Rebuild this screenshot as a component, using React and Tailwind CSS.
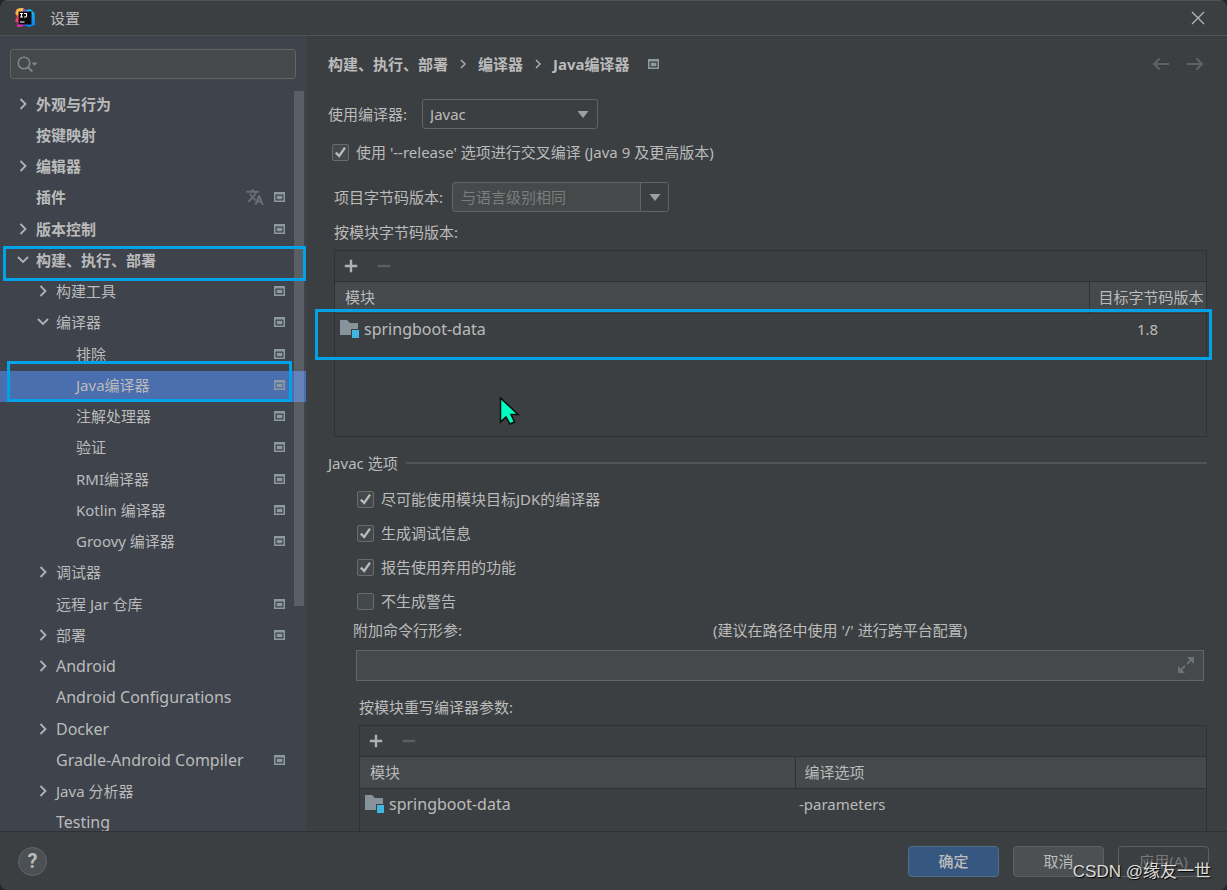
import React from "react";

const treeItems = [
  { label: "外观与行为", depth: 0, arrow: "right", bold: true },
  { label: "按键映射", depth: 0, bold: true },
  { label: "编辑器", depth: 0, arrow: "right", bold: true },
  { label: "插件", depth: 0, bold: true, project: true, translate: true },
  { label: "版本控制", depth: 0, arrow: "right", bold: true, project: true },
  { label: "构建、执行、部署", depth: 0, arrow: "down", bold: true, marked: true },
  { label: "构建工具", depth: 1, arrow: "right", project: true },
  { label: "编译器", depth: 1, arrow: "down", project: true },
  { label: "排除", depth: 2, project: true },
  { label: "Java编译器", depth: 2, project: true, selected: true },
  { label: "注解处理器", depth: 2, project: true },
  { label: "验证", depth: 2, project: true },
  { label: "RMI编译器", depth: 2, project: true },
  { label: "Kotlin 编译器", depth: 2, project: true },
  { label: "Groovy 编译器", depth: 2, project: true },
  { label: "调试器", depth: 1, arrow: "right" },
  { label: "远程 Jar 仓库", depth: 1, project: true },
  { label: "部署", depth: 1, arrow: "right", project: true },
  { label: "Android", depth: 1, arrow: "right", latin: true },
  { label: "Android Configurations", depth: 1, latin: true },
  { label: "Docker", depth: 1, arrow: "right", latin: true },
  { label: "Gradle-Android Compiler", depth: 1, project: true, latin: true },
  { label: "Java 分析器", depth: 1, arrow: "right" },
  { label: "Testing", depth: 1, latin: true },
];

const depthPadding = ["pl-4", "pl-9", "pl-14"];

const javacOptions = [
  { id: "target-jdk", label: "尽可能使用模块目标JDK的编译器", checked: true },
  { id: "debug-info", label: "生成调试信息", checked: true },
  { id: "deprecation", label: "报告使用弃用的功能", checked: true },
  { id: "no-warnings", label: "不生成警告", checked: false },
];

function Logo() {
  return (
    <svg width="20" height="20" viewBox="0 0 20 20" aria-hidden="true">
      <defs>
        <linearGradient id="logo-warm" x1="0" y1="0" x2="0" y2="1">
          <stop offset="0" stopColor="#fdb060" />
          <stop offset="0.4" stopColor="#fc4a5c" />
          <stop offset="1" stopColor="#f62db0" />
        </linearGradient>
        <linearGradient id="logo-cool" x1="0" y1="0" x2="0" y2="1">
          <stop offset="0" stopColor="#14c3f5" />
          <stop offset="1" stopColor="#0a7cf2" />
        </linearGradient>
      </defs>
      <path d="M11 2l4-1 4.500 4 0.500 12-6 2-6-2z" fill="url(#logo-cool)" />
      <path d="M2 1l6-1 4 4-5 13-5 2 1-4-3-2 2-4-2-4z" fill="url(#logo-warm)" />
      <path d="M2 1l5-1 2 4-5 4-3-2z" fill="#fdc34f" />
      <path d="M6 15l-4 4 5-0.500 3-2.500z" fill="#f02dc0" />
      <path d="M8 0.500l3 1.500 1 3H8z" fill="#a14be0" />
      <rect x="3.500" y="3.500" width="13" height="13" fill="#100a0c" />
      <path
        d="M5 5.500h3M6.500 5.500v3.500M5 9h3M9 5.500h2.500v2.500q0 1-1.200 1H9"
        fill="none"
        stroke="#fff"
        strokeWidth="1.1"
      />
      <path d="M5 14h4.500" stroke="#fff" strokeWidth="1.200" />
    </svg>
  );
}

function Chevron({ direction }) {
  return (
    <svg width="14" height="14" viewBox="0 0 14 14" aria-hidden="true" fill="none" stroke="#b0b3b5" strokeWidth="1.8">
      {direction === "down" ? <path d="M2 4l5 5 5-5" /> : <path d="M4.500 2l5 5-5 5" />}
    </svg>
  );
}

function ProjectIcon() {
  return (
    <svg width="11" height="10" viewBox="0 0 11 10" aria-hidden="true">
      <path d="M0 0h11v10H0zM1.500 2.500v6h8v-6z" fill="#8e9aa2" fillRule="evenodd" />
      <rect x="2.800" y="3.800" width="5.500" height="3.400" fill="#8e9aa2" />
    </svg>
  );
}

function TranslateIcon() {
  return (
    <svg width="18" height="18" viewBox="0 0 24 24" aria-hidden="true" fill="#6a707a" stroke="#6a707a" strokeWidth="0.800">
      <path d="M12.87 15.07l-2.54-2.51.03-.03A17.52 17.52 0 0 0 14.07 6H17V4h-7V2H8v2H1v1.99h11.17C11.5 7.92 10.44 9.75 9 11.35 8.07 10.32 7.3 9.19 6.69 8h-2c.73 1.63 1.73 3.17 2.98 4.56l-5.09 5.02L4 19l5-5 3.11 3.11.76-2.04zM18.5 10h-2L12 22h2l1.12-3h4.75L21 22h2l-4.5-12zm-2.62 7l1.62-4.33L19.12 17h-3.24z" />
    </svg>
  );
}

function ModuleIcon() {
  return (
    <svg width="20" height="18" viewBox="0 0 20 18" aria-hidden="true">
      <path d="M0 0h7l3 3h8v6h-7v6H0z" fill="#87939a" />
      <rect x="12" y="10" width="7" height="8" fill="#40b6e0" />
    </svg>
  );
}

function Triangle() {
  return (
    <svg width="12" height="7" viewBox="0 0 12 7" aria-hidden="true">
      <path d="M0.500 0h11L6 7z" fill="#9da0a2" />
    </svg>
  );
}

function Separator() {
  return (
    <svg width="6" height="10" viewBox="0 0 6 10" fill="none" stroke="#b0b3b5" strokeWidth="1.4" aria-hidden="true">
      <path d="M1 1l4 4-4 4" />
    </svg>
  );
}

function Mark({ className }) {
  return <span aria-hidden="true" className={`pointer-events-none absolute z-20 border-3 border-[#00a2e8] ${className}`} />;
}

function CheckOption({ id, label, checked }) {
  return (
    <div className="flex items-center gap-[7px]">
      <span className="relative flex size-[17px] shrink-0">
        <input
          id={id}
          type="checkbox"
          defaultChecked={checked}
          className="peer size-full appearance-none rounded-xs border border-[#6b6b6b] bg-[#43494a]"
        />
        <svg
          className="pointer-events-none absolute inset-0 hidden peer-checked:block"
          width="17"
          height="17"
          viewBox="0 0 17 17"
          fill="none"
          stroke="#b8babb"
          strokeWidth="2.4"
          aria-hidden="true"
        >
          <path d="M3.800 8.600l3.400 3.400L13 3.600" />
        </svg>
      </span>
      <label htmlFor={id}>{label}</label>
    </div>
  );
}

function Toolbar() {
  return (
    <div className="flex h-[31px] items-center gap-[19px] border-b border-[#2f3132] pl-[9px]">
      <button type="button" aria-label="添加">
        <svg width="14" height="14" viewBox="0 0 14 14" aria-hidden="true">
          <path d="M5.800 0.800h2.400v5h5v2.400h-5v5H5.800v-5h-5V5.800h5z" fill="#afb1b3" />
        </svg>
      </button>
      <button type="button" aria-label="移除" disabled>
        <svg width="14" height="14" viewBox="0 0 14 14" aria-hidden="true">
          <path d="M0.800 5.800h12.400v2.400H0.800z" fill="#5c5e60" />
        </svg>
      </button>
    </div>
  );
}

function TreeRow({ item }) {
  return (
    <li className="relative h-[31px] nth-[4n]:h-8" role="none">
      <button
        type="button"
        role="treeitem"
        aria-selected={!!item.selected}
        className={`flex h-[31px] w-full items-center pr-[21px] pb-[3px] text-left ${depthPadding[item.depth]} ${
          item.selected ? "bg-[#4b6eaf]" : ""
        } ${item.bold ? "font-bold" : ""} ${item.latin ? "text-base" : ""}`}
      >
        <span className="flex w-5 shrink-0">{item.arrow && <Chevron direction={item.arrow} />}</span>
        <span className="flex-1 whitespace-nowrap">{item.label}</span>
        <span className="flex items-center gap-2.5">
          {item.translate && <TranslateIcon />}
          {item.project && <ProjectIcon />}
        </span>
      </button>
      {item.marked && <Mark className="inset-x-0 top-0 -bottom-1 ml-[3px]" />}
      {item.selected && <Mark className="-top-2.5 right-3.5 bottom-0 left-[7px]" />}
    </li>
  );
}

function Sidebar() {
  return (
    <aside className="flex w-[306px] shrink-0 flex-col overflow-hidden bg-[#3e434c]">
      <div className="relative mx-2.5 mt-[13px] h-[30px] shrink-0">
        <input
          type="search"
          aria-label="搜索设置"
          className="size-full appearance-none rounded-[3px] border border-[#646464] bg-[#45494a] pr-2 pl-9 outline-none"
        />
        <svg className="pointer-events-none absolute top-[7px] left-[7px]" width="22" height="18" viewBox="0 0 22 18" fill="none" aria-hidden="true">
          <circle cx="7" cy="7" r="5.8" stroke="#7c858b" strokeWidth="1.6" />
          <path d="M11 11.3l4.3 4.2" stroke="#7c858b" strokeWidth="2" />
          <path d="M14.5 6.5h6l-3 3.4z" fill="#7c858b" />
        </svg>
      </div>
      <div className="relative mt-[11px] min-h-0 flex-1 overflow-hidden">
        <ul role="tree" aria-label="设置类别">
          {treeItems.map((item) => (
            <TreeRow key={item.label} item={item} />
          ))}
        </ul>
        <span className="absolute top-px right-0.5 h-[69.5%] w-2.5 bg-white/15" aria-hidden="true" />
      </div>
    </aside>
  );
}

function Content() {
  return (
    <main className="min-w-0 flex-1 overflow-hidden pr-5 pl-[22px]">
      <div className="flex h-14 items-center justify-between">
        <nav aria-label="路径" className="flex items-center gap-3 font-bold">
          <a href="#build">构建、执行、部署</a>
          <Separator />
          <a href="#compiler">编译器</a>
          <Separator />
          <a href="#java">Java编译器</a>
          <span className="pl-1.5">
            <ProjectIcon />
          </span>
        </nav>
        <div className="flex gap-4 pr-[3px]">
          <button type="button" aria-label="后退" disabled>
            <svg width="18" height="14" viewBox="0 0 18 14" fill="none" stroke="#5f6163" strokeWidth="2.2" aria-hidden="true">
              <path d="M17 7H2M7.5 1.5L2 7l5.5 5.5" />
            </svg>
          </button>
          <button type="button" aria-label="前进" disabled>
            <svg width="18" height="14" viewBox="0 0 18 14" fill="none" stroke="#5f6163" strokeWidth="2.2" aria-hidden="true">
              <path d="M1 7h15M10.500 1.500L16 7l-5.500 5.500" />
            </svg>
          </button>
        </div>
      </div>

      <div className="mt-[7px] flex items-center gap-[15px]">
        <label htmlFor="compiler">使用编译器:</label>
        <span className="relative flex h-[30px] w-44">
          <select
            id="compiler"
            className="size-full appearance-none rounded-[3px] border border-[#646464] bg-[#3c3f41] px-[7px] outline-none"
          >
            <option>Javac</option>
            <option>Eclipse</option>
          </select>
          <span className="pointer-events-none absolute top-3 right-[9px]">
            <Triangle />
          </span>
        </span>
      </div>

      <div className="mt-[11px] pl-1">
        <CheckOption id="release" label="使用 '--release' 选项进行交叉编译 (Java 9 及更高版本)" checked />
      </div>

      <div className="mt-[18px] flex items-center gap-[9px] pl-1.5">
        <label htmlFor="bytecode">项目字节码版本:</label>
        <div className="flex h-[30px] w-[217px] overflow-hidden rounded-[3px] border border-[#646464] bg-[#45494a]">
          <input
            id="bytecode"
            placeholder="与语言级别相同"
            className="min-w-0 flex-1 px-2 outline-none placeholder:text-[#7b7d7e]"
          />
          <button type="button" aria-label="选择版本" className="flex w-7 items-center justify-center border-l border-[#646464] bg-[#3c3f41]">
            <Triangle />
          </button>
        </div>
      </div>

      <h2 className="mt-2 pl-1.5">按模块字节码版本:</h2>
      <div className="relative mt-1.5 ml-1.5 h-[187px] border border-[#2f3132]">
        <Toolbar />
        <table className="w-full table-fixed border-collapse text-left">
          <thead>
            <tr className="h-[31px] border-b border-[#2f3132] bg-[#45494b]">
              <th className="border-r border-[#2f3132] pl-2.5 font-normal">模块</th>
              <th className="w-[117px] pl-[9px] font-normal whitespace-nowrap">目标字节码版本</th>
            </tr>
          </thead>
          <tbody>
            <tr className="h-[31px]">
              <td className="pl-[5px]">
                <span className="flex items-center gap-1 text-base">
                  <ModuleIcon />
                  springboot-data
                </span>
              </td>
              <td className="text-center">1.8</td>
            </tr>
          </tbody>
        </table>
        <Mark className="top-[58px] -right-1.5 -left-5 h-[51px]" />
        <svg className="absolute top-[145px] left-[164px]" width="22" height="30" viewBox="0 0 22 30" aria-hidden="true">
          <path d="M1.500 2v24l5.500-5 4 7 4.500-2-3.500-7.500h7z" fill="#00ffc0" stroke="#0a0a0a" strokeWidth="1.500" />
        </svg>
      </div>

      <div className="mt-3.5 flex items-center gap-2">
        <h2>Javac 选项</h2>
        <span className="h-0.5 flex-1 bg-[#515456]" />
      </div>

      <div className="mt-3 flex flex-col gap-2.5 pl-[29px]">
        {javacOptions.map((option) => (
          <CheckOption key={option.id} {...option} />
        ))}
      </div>

      <div className="mt-[5px] flex pl-[25px]">
        <label htmlFor="extra-args" className="w-[360px] shrink-0">
          附加命令行形参:
        </label>
        <span className="whitespace-nowrap">(建议在路径中使用 '/' 进行跨平台配置)</span>
      </div>
      <div className="relative mt-2 mr-[3px] ml-7 h-[31px]">
        <input id="extra-args" className="size-full border border-[#646464] bg-[#45494a] pr-8 pl-2 outline-none" />
        <button type="button" aria-label="展开" className="absolute top-[7px] right-2.5">
          <svg width="16" height="16" viewBox="0 0 16 16" aria-hidden="true">
            <path d="M9 0h7v7zM0 9v7h7z" fill="#6c7479" />
            <path d="M9 7l4-4M7 9l-4 4" stroke="#6c7479" strokeWidth="1.800" />
          </svg>
        </button>
      </div>

      <h2 className="mt-3.5 pl-[31px]">按模块重写编译器参数:</h2>
      <div className="mt-1.5 ml-[31px] h-[187px] border border-[#2f3132]">
        <Toolbar />
        <table className="w-full table-fixed border-collapse text-left">
          <thead>
            <tr className="h-[31px] border-b border-[#2f3132] bg-[#45494b]">
              <th className="w-[435px] border-r border-[#2f3132] pl-2.5 font-normal">模块</th>
              <th className="pl-[9px] font-normal">编译选项</th>
            </tr>
          </thead>
          <tbody>
            <tr className="h-[31px]">
              <td className="pl-[5px]">
                <span className="flex items-center gap-1 text-base">
                  <ModuleIcon />
                  springboot-data
                </span>
              </td>
              <td className="pl-1">-parameters</td>
            </tr>
          </tbody>
        </table>
      </div>
    </main>
  );
}

export default function App() {
  return (
    <div className="h-screen bg-[#25282b] font-['Noto_Sans','Noto_Sans_CJK_SC',sans-serif] text-[15px] leading-6 text-[#bbbbbb]">
      <div className="relative flex h-full flex-col overflow-hidden rounded-lg bg-[#3c3f41]">
        <header className="flex h-9 shrink-0 items-center border-y border-[#515456] pr-[22px] pl-[15px]">
          <Logo />
          <h1 className="flex-1 pl-[15px]">设置</h1>
          <button type="button" aria-label="关闭">
            <svg width="14" height="14" viewBox="0 0 14 14" fill="none" stroke="#b4b6b7" strokeWidth="1.300" aria-hidden="true">
              <path d="M1 1l12 12M13 1L1 13" />
            </svg>
          </button>
        </header>
        <div className="flex min-h-0 flex-1">
          <Sidebar />
          <Content />
        </div>
        <footer className="flex h-[59px] shrink-0 items-center gap-3.5 border-t border-[#2f3132] pr-[18px] pl-[18px]">
          <button
            type="button"
            aria-label="帮助"
            className="mr-auto flex size-[29px] items-center justify-center rounded-full border border-[#636668] bg-[#4c5052] font-['Roboto',sans-serif] text-xl font-bold"
          >
            ?
          </button>
          <button type="button" className="h-[31px] w-[91px] rounded-sm border border-[#4c708c] bg-[#365880] font-medium">
            确定
          </button>
          <button type="button" className="h-[31px] w-[91px] rounded-sm border border-[#5e6060] bg-[#4c5052]">
            取消
          </button>
          <button type="button" disabled className="h-[31px] w-[91px] rounded-sm border border-[#5e6060] text-[#777777]">
            应用(A)
          </button>
        </footer>
        <p className="pointer-events-none absolute right-4 bottom-1.5 font-['Liberation_Sans','Noto_Sans_CJK_SC',sans-serif] text-[17px] text-[#dddddd] text-shadow-[1px_1px_1px_#000000]">
          CSDN @缘友一世
        </p>
      </div>
    </div>
  );
}
